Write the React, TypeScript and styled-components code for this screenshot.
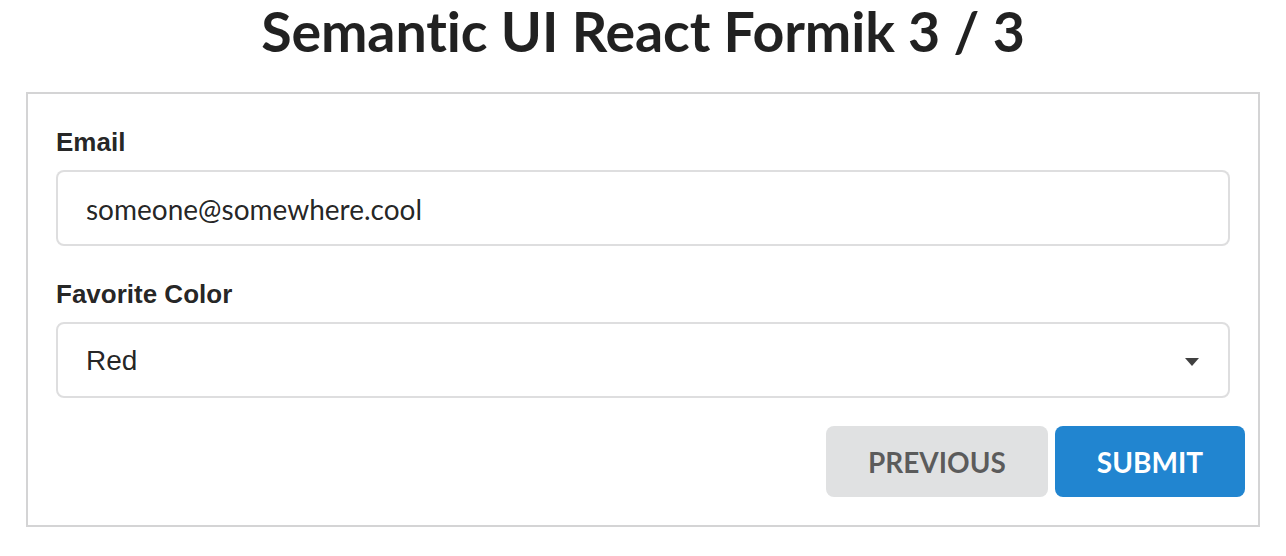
import * as React from 'react';
import styled, { createGlobalStyle } from 'styled-components';

const GlobalStyle = createGlobalStyle`
  html, body {
    margin: 0;
    padding: 0;
    background: #ffffff;
  }
  * {
    box-sizing: border-box;
  }
`;

const Page = styled.div`
  padding: 0 26px;
  font-family: Lato, "Liberation Sans", sans-serif;
  color: rgba(0, 0, 0, 0.87);
  font-variant-ligatures: none;
`;

const Title = styled.h1`
  margin: 0 0 31px;
  font-family: Lato, sans-serif;
  font-weight: 700;
  font-size: 55.5px;
  line-height: 61px;
  letter-spacing: -0.1px;
  text-align: center;
  color: rgba(0, 0, 0, 0.87);
  font-variant-ligatures: none;
`;

const Segment = styled.form`
  border: 2px solid #d4d4d5;
  padding: 34px 28px 28px;
  display: flex;
  flex-direction: column;
`;

const Field = styled.div<{ $last?: boolean }>`
  display: flex;
  flex-direction: column;
  gap: 13px;
  margin-bottom: ${p => (p.$last ? '28px' : '34px')};
`;

const Label = styled.label`
  font-family: "Liberation Sans", Arial, sans-serif;
  font-weight: 700;
  font-size: 26px;
  line-height: 29px;
  color: rgba(0, 0, 0, 0.87);
`;

const Input = styled.input`
  height: 76px;
  width: 100%;
  border: 2px solid rgba(34, 36, 38, 0.15);
  border-radius: 8px;
  padding: 2px 28px 0;
  font-family: Lato, sans-serif;
  font-size: 28px;
  color: rgba(0, 0, 0, 0.87);
  background: #ffffff;
  outline: none;
`;

const Select = styled.div`
  height: 76px;
  border: 2px solid rgba(34, 36, 38, 0.15);
  border-radius: 8px;
  padding: 2px 28px 0 28px;
  display: flex;
  align-items: center;
  justify-content: space-between;
  font-family: "Liberation Sans", Arial, sans-serif;
  font-size: 28px;
  color: rgba(0, 0, 0, 0.87);
`;

const Caret = styled.svg`
  width: 14px;
  height: 8px;
  margin-right: 1px;
  margin-top: 2px;
`;

const Actions = styled.div`
  display: flex;
  justify-content: flex-end;
  gap: 7px;
  margin-right: -15px;
`;

const Button = styled.button<{ $primary?: boolean }>`
  height: 71px;
  padding: 0 42px;
  border: none;
  border-radius: 8px;
  font-family: Lato, sans-serif;
  font-weight: 700;
  font-size: 28px;
  text-transform: uppercase;
  background: ${p => (p.$primary ? '#2185d0' : '#e0e1e2')};
  color: ${p => (p.$primary ? '#ffffff' : 'rgba(0, 0, 0, 0.6)')};
  cursor: pointer;
`;

export default function App() {
  return (
    <Page>
      <GlobalStyle />
      <Title>Semantic UI React Formik 3 / 3</Title>
      <Segment onSubmit={e => e.preventDefault()}>
        <Field>
          <Label>Email</Label>
          <Input defaultValue="someone@somewhere.cool" />
        </Field>
        <Field $last>
          <Label>Favorite Color</Label>
          <Select>
            <span>Red</span>
            <Caret viewBox="0 0 14 8">
              <path d="M0 0 L14 0 L7 8 Z" fill="rgba(0,0,0,0.75)" />
            </Caret>
          </Select>
        </Field>
        <Actions>
          <Button type="button">Previous</Button>
          <Button type="submit" $primary>Submit</Button>
        </Actions>
      </Segment>
    </Page>
  );
}
